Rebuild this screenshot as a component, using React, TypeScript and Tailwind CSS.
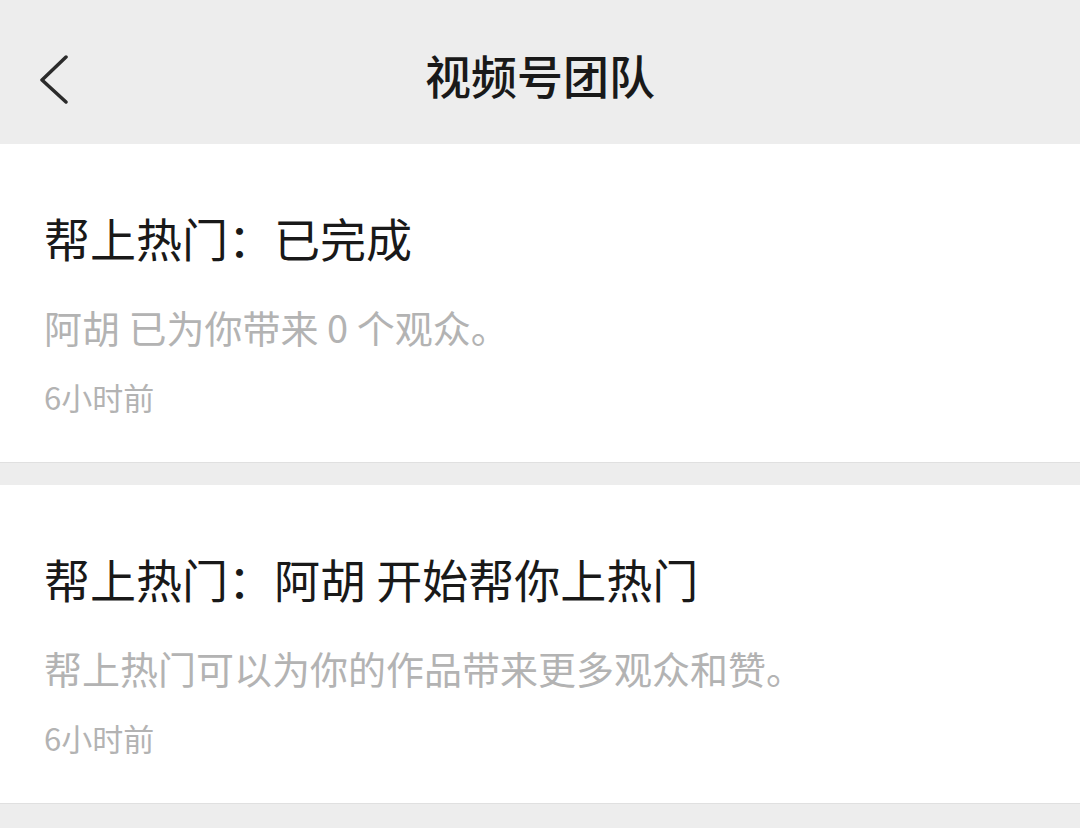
import React from "react";

type Notice = {
  id: number;
  title: string;
  body: string;
  time: string;
};

const notices: Notice[] = [
  { id: 1, title: "帮上热门：已完成", body: "阿胡 已为你带来 0 个观众。", time: "6小时前" },
  { id: 2, title: "帮上热门：阿胡 开始帮你上热门", body: "帮上热门可以为你的作品带来更多观众和赞。", time: "6小时前" },
];

function BackIcon() {
  return (
    <svg width="32" height="50" viewBox="0 0 32 50" fill="none">
      <path d="M28 3 L4 26 L28 48" stroke="#2b2b2b" strokeWidth="3.5" strokeLinecap="round" strokeLinejoin="round" />
    </svg>
  );
}

export default function App() {
  return (
    <div
      className="min-h-[828px] w-[1080px] bg-[#ededed]"
      style={{ fontFamily: '"Noto Sans CJK SC", "Noto Sans", sans-serif' }}
    >
      {/* Header */}
      <div className="relative flex h-[144px] items-center justify-center bg-[#ededed]">
        <button className="absolute left-[38px] top-[54px]">
          <BackIcon />
        </button>
        <h1 className="mt-[4px] text-[46px] leading-none font-medium text-[#191919]">视频号团队</h1>
      </div>

      {/* List */}
      <ul className="flex flex-col gap-[22px]">
        {notices.map((n) => (
          <li key={n.id} className="border-b border-[#e0e0e0] bg-white px-[44px] pt-[65px] pb-[46px]">
            <div className="text-[46px] leading-[56px] text-[#191919]">{n.title}</div>
            <div className="mt-[39px] text-[38px] leading-[46px] text-[#b3b3b3]">{n.body}</div>
            <div className="mt-[28px] text-[31px] leading-[38px] text-[#b3b3b3]">{n.time}</div>
          </li>
        ))}
      </ul>
    </div>
  );
}
